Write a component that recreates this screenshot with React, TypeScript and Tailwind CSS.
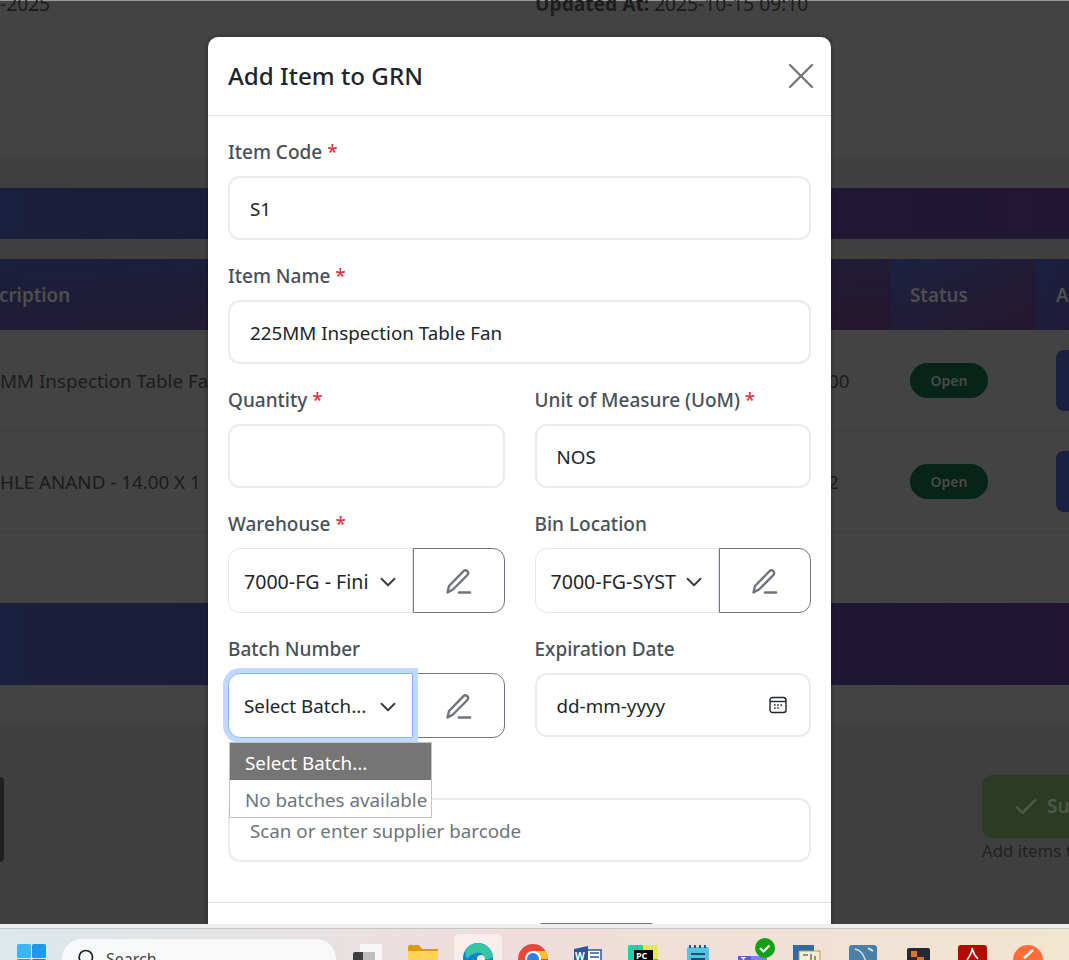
import { X, ChevronDown, Check, Search } from "lucide-react"

const font = "font-['Noto_Sans','Open_Sans',sans-serif]"

function Label({ text, required }: { text: string; required?: boolean }) {
  return (
    <label className="mb-[17px] block h-[14px] text-[19px] leading-[14px] font-medium text-[#495057]">
      {text}
      {required && <span className="text-[#dc3545]"> *</span>}
    </label>
  )
}

function TextField({ value, placeholder }: { value?: string; placeholder?: boolean }) {
  return (
    <div
      className={`flex h-[64px] items-center rounded-[12px] border-2 border-[#e9ecef] bg-white px-5 pt-[2px] text-[18.8px] ${
        placeholder ? "text-[#6c757d]" : "text-[#212529]"
      }`}
    >
      {value}
    </div>
  )
}

function PencilIcon() {
  return (
    <svg width="28" height="28" viewBox="0 0 28 28" fill="none" stroke="#6c757d" strokeWidth="2.4" strokeLinejoin="round" strokeLinecap="round">
      <path d="M2.5 25.5 L4 19 L18.5 4.2 a2.7 2.7 0 0 1 3.9 3.8 L8 22.5 Z" />
      <path d="M14 25.5 H25" strokeWidth="2.6" />
    </svg>
  )
}

function SelectGroup({ value, focused }: { value: string; focused?: boolean }) {
  return (
    <div className="flex h-[65px]">
      <div
        className={`z-10 flex w-[184.5px] shrink-0 items-center rounded-l-[12px] border bg-white pt-[2px] pl-[15px] text-[#212529] ${
          focused
            ? "border-[#86b7fe] pr-[11px] text-[18.8px] shadow-[0_0_0_5px_#c0d9fd]"
            : "border-[#e2e5e9] pr-[11px] text-[19.6px]"
        }`}
      >
        <span className="w-[125px] shrink-0 overflow-hidden whitespace-nowrap">{value}</span>
        <ChevronDown size={26} strokeWidth={1.7} className="ml-auto shrink-0 text-[#343a40]" />
      </div>
      <button className="flex flex-1 items-center justify-center rounded-r-[12px] border border-[#6c757d] bg-white">
        <PencilIcon />
      </button>
    </div>
  )
}

function Row({ text, num }: { text: string; num: string }) {
  return (
    <div className="flex h-[101px] items-center border-b border-[#3d3d3d] pt-[1px]">
      <div className="w-[808px] whitespace-nowrap pt-[2px]">{text}</div>
      <div className="w-[102px] pt-[2px] pl-[20px]">{num}</div>
      <div className="flex h-[35px] w-[78px] items-center justify-center rounded-full bg-[#062418] text-[14px] font-semibold text-[#4a4a4a]">Open</div>
      <div className="ml-[68px] h-[61px] flex-1 rounded-l-[8px] bg-[#1a2040]" />
    </div>
  )
}

function Backdrop() {
  return (
    <div className="flex h-full flex-col bg-[#434343] text-[18.8px] text-[#1c1c1c]">
      <div className="h-px bg-[#9a9a9a]" />
      <div className="relative h-[157px]">
        <span className="absolute -top-[9px] left-0 text-[19.2px] leading-[24px]">-2025</span>
        <span className="absolute -top-[9px] left-[535px] whitespace-nowrap text-[19.2px] leading-[24px]">
          <b>Updated At:</b> 2025-10-15 09:10
        </span>
      </div>
      <div className="h-[30px] bg-[#404040]" />
      <div className="h-[51px] bg-gradient-to-r from-[#1a1f3d] via-[#1b1a36] to-[#221635]" />
      <div className="h-[20px] bg-[#404040]" />
      {/* table header */}
      <div className="flex h-[71px] items-center text-[18.8px] font-semibold text-[#4e4e4e]">
        <div className="flex h-full w-[890px] items-center bg-gradient-to-br from-[#1a1f3d] to-[#25172e] pt-[2px]">
          <span className="-ml-[1px]">cription</span>
        </div>
        <div className="flex h-full w-[146px] items-center bg-gradient-to-br from-[#1a2040] to-[#25172e] pt-[2px] pl-[20px]">Status</div>
        <div className="flex h-full flex-1 items-center bg-gradient-to-br from-[#1a2040] to-[#1f1a38] pt-[2px] pl-[20px]">A</div>
      </div>
      <Row text="MM Inspection Table Fa" num="00" />
      <Row text="HLE ANAND - 14.00 X 1" num="2" />
      <div className="h-[71px] bg-[#434343]" />
      <div className="h-[82px] bg-gradient-to-r from-[#1a1f3d] via-[#1b1a36] to-[#201633]" />
      <div className="h-[40px] bg-[#434343]" />
      <div className="flex flex-1 justify-between bg-[#3f3f3f] pt-[50px]">
        <div className="mt-[2px] h-[85px] w-[4px] rounded-r-[6px] bg-[#1e1f20]" />
        <div className="w-[87px]">
          <div className="flex h-[63px] w-[100px] items-center gap-[7px] rounded-l-[10px] bg-[#2e3b24] pl-[30px] text-[19px] font-semibold text-[#4d5a48]">
            <Check size={28} strokeWidth={2} className="shrink-0" />
            <span>Su</span>
          </div>
          <p className="mt-[1px] whitespace-nowrap text-[16.8px] leading-[24px] text-[#222222]">Add items t</p>
        </div>
      </div>
    </div>
  )
}

function Modal() {
  return (
    <div className="absolute top-[37px] left-[208px] flex h-[900px] w-[623px] flex-col rounded-t-[10px] bg-white shadow-[0_0_4px_rgba(0,0,0,0.4)]">
      <div className="flex h-[79px] shrink-0 items-center justify-between border-b border-[#dee2e6] pr-[8px] pl-5">
        <h2 className="text-[24.2px] font-medium text-[#212529]">Add Item to GRN</h2>
        <X size={44} strokeWidth={1.3} className="text-[#757575]" />
      </div>
      <div className="relative flex-1 px-5 pt-[29px]">
        <div className="mb-[29px]">
          <Label text="Item Code" required />
          <TextField value="S1" />
        </div>
        <div className="mb-[29px]">
          <Label text="Item Name" required />
          <TextField value="225MM Inspection Table Fan" />
        </div>
        <div className="mb-[29px] grid grid-cols-2 gap-x-[30px]">
          <div>
            <Label text="Quantity" required />
            <TextField />
          </div>
          <div>
            <Label text="Unit of Measure (UoM)" required />
            <TextField value="NOS" />
          </div>
        </div>
        <div className="mb-[29px] grid grid-cols-2 gap-x-[30px]">
          <div>
            <Label text="Warehouse" required />
            <SelectGroup value="7000-FG - Fini" />
          </div>
          <div>
            <Label text="Bin Location" />
            <SelectGroup value="7000-FG-SYST" />
          </div>
        </div>
        <div className="mb-[29px] grid grid-cols-2 gap-x-[30px]">
          <div>
            <Label text="Batch Number" />
            <SelectGroup value="Select Batch..." focused />
          </div>
          <div>
            <Label text="Expiration Date" />
            <div className="flex h-[64px] items-center justify-between rounded-[12px] border-2 border-[#e9ecef] bg-white pr-[22px] pl-5 text-[18.8px] text-[#212529]">
              <span className="pt-[2px]">dd-mm-yyyy</span>
              <svg width="18" height="18" viewBox="0 0 18 18" fill="none" stroke="#212529" strokeWidth="1.4">
                <rect x="1" y="1.5" width="16" height="15" rx="2.5" />
                <path d="M1 5.5H17" />
                <path d="M5 9h1.6M8.2 9h1.6M11.4 9H13M5 12h1.6M8.2 12h1.6" strokeWidth="1.6" />
              </svg>
            </div>
          </div>
        </div>
        <div>
          <Label text="Supplier Barcode" />
          <TextField value="Scan or enter supplier barcode" placeholder />
        </div>
        {/* native select popup */}
        <div className="absolute top-[626px] left-[21px] z-20 w-[203px] border border-[#c4c4c4] bg-white text-[18.8px] leading-[41px]">
          <div className="h-[37px] bg-[#757575] pl-[15px] text-white">Select Batch...</div>
          <div className="h-[37px] whitespace-nowrap pl-[15px] text-[#6c757d]">No batches available</div>
        </div>
      </div>
      <div className="flex h-[35px] shrink-0 border-t border-[#dee2e6] pt-[20px] pl-[332px]">
        <div className="h-[2px] w-[113px] rounded-t-[6px] bg-[#6c757d]" />
      </div>
    </div>
  )
}

function TaskIcons() {
  return (
    <svg width="733" height="31" viewBox="336 929 733 31" className="shrink-0">
      {/* copilot-like stack */}
      <rect x="360" y="944" width="22" height="18" rx="2" fill="#f7f7f7" />
      <rect x="353" y="952" width="22" height="10" rx="2" fill="#3e3e3e" />
      <rect x="363" y="952" width="12" height="10" fill="#bdbdbd" />
      {/* folder */}
      <path d="M408 949h30v13h-30z" fill="#fdd35b" />
      <path d="M408 947a2 2 0 0 1 2-2h9l3 4h16v2h-30z" fill="#dd9a10" />
      {/* edge */}
      <rect x="454" y="934" width="48" height="30" rx="5" fill="#f8eeec" />
      <circle cx="478" cy="958" r="15" fill="#0d83d8" />
      <path d="M465 951a15 15 0 0 1 28 5c-1 3-5 4-8 3 0-4-4-7-9-6-4 1-7 3-9 6-1-3-2-5-2-8z" fill="#36c6a6" />
      <circle cx="481" cy="959" r="4" fill="#f5ece8" />
      {/* chrome */}
      <circle cx="533" cy="959" r="15" fill="#e8463a" />
      <path d="M533 959l-14 2a15 15 0 0 0 14 13z" fill="#36a852" />
      <path d="M533 959l0-8h13a15 15 0 0 1 2 8z" fill="#fbc02d" />
      <circle cx="533" cy="959" r="8" fill="#fff" />
      <circle cx="533" cy="959" r="6" fill="#2f7fe6" />
      {/* word */}
      <rect x="587" y="950" width="14" height="12" fill="#fff" stroke="#2b579a" strokeWidth="1.5" />
      <path d="M574 949l14-3v16h-14z" fill="#2b579a" />
      <text x="575" y="960" fontSize="10" fontWeight="700" fill="#fff">W</text>
      <path d="M590 953h9M590 957h9" stroke="#2b579a" strokeWidth="1.5" />
      {/* pycharm */}
      <rect x="628" y="945" width="30" height="17" rx="2" fill="#20d0a8" />
      <rect x="643" y="945" width="15" height="14" fill="#e8ea4a" />
      <rect x="634" y="950" width="19" height="12" fill="#000" />
      <text x="636" y="959" fontSize="9" fontWeight="700" fill="#fff">PC</text>
      {/* notepad */}
      <rect x="687" y="947" width="22" height="15" rx="2" fill="#55c3e3" />
      <path d="M690 945v3M695 945v3M700 945v3M705 945v3" stroke="#1f5c80" strokeWidth="2" />
      <path d="M691 954h14M691 959h14" stroke="#14506f" strokeWidth="2" />
      {/* teams + badge */}
      <rect x="749" y="956" width="18" height="8" rx="3" fill="#7b83eb" />
      <rect x="738" y="956" width="13" height="8" fill="#5b5fc7" />
      <text x="741" y="963" fontSize="8" fontWeight="700" fill="#fff">T</text>
      <circle cx="765" cy="948" r="10" fill="#12a112" />
      <path d="M760 948l3.5 3.5 6-6" stroke="#fff" strokeWidth="2.2" fill="none" />
      {/* sql tools */}
      <path d="M793 945h21v17h-21z" fill="#2f6ba8" />
      <rect x="799" y="951" width="21" height="11" fill="#f2ecd8" stroke="#c99a3a" />
      <path d="M803 955h5M811 954v6M815 956v4" stroke="#6a7d52" strokeWidth="1.5" />
      <rect x="849" y="945" width="28" height="18" rx="3" fill="#4c7fa6" />
      <path d="M855 949c6 1 9 6 11 13" stroke="#cfe2ef" strokeWidth="1.5" fill="none" />
      <path d="M868 948l5 3" stroke="#e6eff5" strokeWidth="2" />
      <rect x="907" y="948" width="23" height="15" rx="2" fill="#222a35" />
      <rect x="911" y="951" width="6" height="6" fill="#ee6c1e" />
      <rect x="917" y="957" width="7" height="6" fill="#ee6c1e" />
      <rect x="958" y="945" width="29" height="18" rx="3" fill="#b30b00" />
      <path d="M967 960c3-4 5-8 5-12 1 4 3 8 6 11" stroke="#fff" strokeWidth="1.5" fill="none" />
      <circle cx="1028" cy="960" r="15" fill="#ff6c37" />
      <path d="M1024 958l9-8" stroke="#fff" strokeWidth="2.5" />
    </svg>
  )
}

function Taskbar() {
  return (
    <div className="relative z-30 h-[36px] shrink-0 overflow-hidden">
      <div className="h-[4px] bg-[#efefef]" />
      <div className="h-px bg-[#c6c8c9]" />
      <div className="flex h-[31px] items-start bg-gradient-to-r from-[#dbe8ec] via-[#f0dcda] to-[#f1e6d0] pl-[17px]">
        <svg width="29" height="29" viewBox="0 0 29 29" className="mt-[15px] shrink-0">
          <rect x="0" y="0" width="14" height="14" rx="1.5" fill="#3cb5f0" />
          <rect x="15" y="0" width="14" height="14" rx="1.5" fill="#1d9ae8" />
          <rect x="0" y="15" width="14" height="14" rx="1.5" fill="#1d9ae8" />
          <rect x="15" y="15" width="14" height="14" rx="1.5" fill="#0f7fd6" />
        </svg>
        <div className="mt-[10px] ml-[16px] flex h-[40px] w-[274px] shrink-0 items-start gap-[11px] rounded-t-[20px] bg-white/75 pt-[9px] pl-[13px] text-[16px] leading-[22px] text-[#444]">
          <Search size={20} strokeWidth={2} className="-scale-x-100 text-[#222]" />
          <span>Search</span>
        </div>
        <TaskIcons />
      </div>
    </div>
  )
}

export default function App() {
  return (
    <div className={`flex h-[960px] w-[1069px] flex-col overflow-hidden ${font}`}>
      <div className="relative min-h-0 flex-1 overflow-hidden">
        <Backdrop />
        <Modal />
      </div>
      <Taskbar />
    </div>
  )
}
